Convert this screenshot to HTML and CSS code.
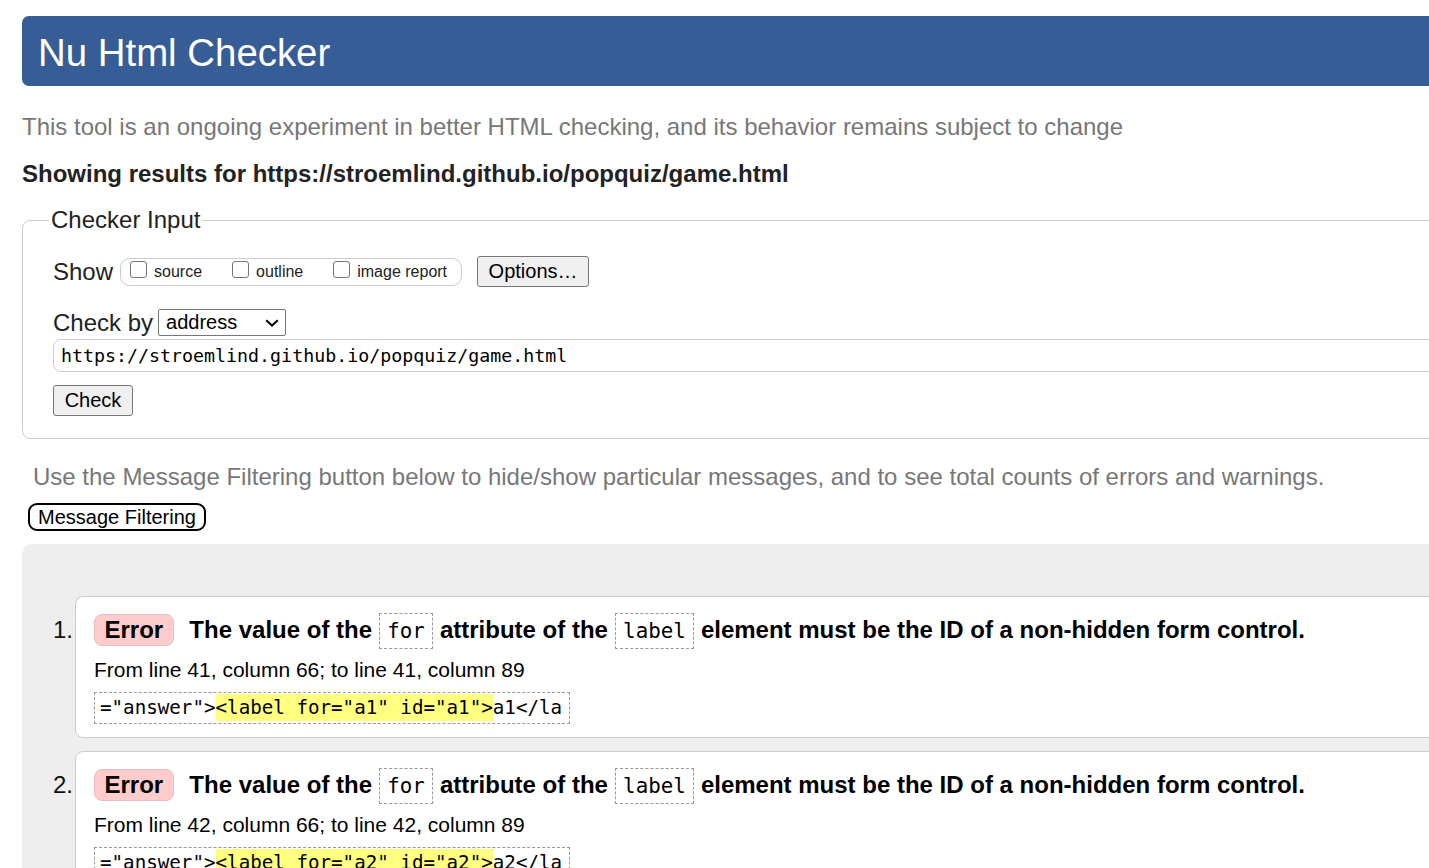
FILE: index.html
```html
<!DOCTYPE html>
<html lang="en">
<head>
<meta charset="utf-8">
<title>Showing results for https://stroemlind.github.io/popquiz/game.html - Nu Html Checker</title>
<link rel="stylesheet" href="styles.css">
</head>
<body>
<div class="page">
  <h1 class="banner">Nu Html Checker</h1>
  <p class="intro">This tool is an ongoing experiment in better HTML checking, and its behavior remains subject to change</p>
  <p class="showing">Showing results for https://stroemlind.github.io/popquiz/game.html</p>

  <fieldset class="checker-input">
    <legend>Checker Input</legend>
    <div class="row show-row">
      <span class="row-label">Show</span>
      <span class="show-opts">
        <label class="opt"><span class="cb"></span>source</label>
        <label class="opt"><span class="cb"></span>outline</label>
        <label class="opt"><span class="cb"></span>image report</label>
      </span>
      <span class="btn options-btn">Options…</span>
    </div>
    <div class="row checkby-row">
      <span class="row-label">Check by</span>
      <span class="select">address<svg class="chev" width="14" height="8" viewBox="0 0 14 8"><path d="M1.2 1.2 L7 6.6 L12.8 1.2" fill="none" stroke="#000" stroke-width="2"/></svg></span>
    </div>
    <div class="url">https://stroemlind.github.io/popquiz/game.html</div>
    <span class="btn check-btn">Check</span>
  </fieldset>

  <p class="filter-note">Use the Message Filtering button below to hide/show particular messages, and to see total counts of errors and warnings.</p>
  <span class="filter-btn">Message Filtering</span>

  <div class="results">
    <ol class="messages">
      <li class="msg-item">
        <p class="msg-line"><span class="badge">Error</span> The value of the <code class="kw">for</code> attribute of the <code class="kw">label</code> element must be the ID of a non-hidden form control.</p>
        <p class="location">From line 41, column 66; to line 41, column 89</p>
        <code class="extract">="answer"&gt;<mark class="hl">&lt;label for="a1" id="a1"&gt;</mark>a1&lt;/la</code>
      </li>
      <li class="msg-item">
        <p class="msg-line"><span class="badge">Error</span> The value of the <code class="kw">for</code> attribute of the <code class="kw">label</code> element must be the ID of a non-hidden form control.</p>
        <p class="location">From line 42, column 66; to line 42, column 89</p>
        <code class="extract">="answer"&gt;<mark class="hl">&lt;label for="a2" id="a2"&gt;</mark>a2&lt;/la</code>
      </li>
    </ol>
  </div>
</div>
</body>
</html>
```

FILE: styles.css
```css
html {
  overflow: hidden;
  background: #fff;
}
body {
  margin: 0;
  font-family: "Liberation Sans", Arial, sans-serif;
  color: #222;
}
.page {
  width: 1460px;
  padding: 16px 0 0 22px;
}
.banner {
  margin: 0;
  box-sizing: border-box;
  height: 70px;
  padding: 4px 0 0 16px;
  line-height: 66px;
  background: #365d95;
  color: #fff;
  font-size: 38.4px;
  font-weight: normal;
  border-radius: 7px;
}
.intro {
  margin: 27px 0 0;
  font-size: 24px;
  line-height: 28px;
  color: #777;
}
.showing {
  margin: 19px 0 0;
  font-size: 24px;
  line-height: 28px;
  font-weight: bold;
  color: #222;
}
.checker-input {
  margin: 18px 0 0;
  padding: 22px 30px 22px 30px;
  border: 1px solid #ccc;
  border-radius: 8px;
  min-width: 0;
}
.checker-input legend {
  font-size: 24px;
  line-height: 28px;
  padding: 0 2px;
  margin-left: -4px;
  color: #222;
}
.row {
  display: flex;
  align-items: center;
}
.row-label {
  font-size: 24px;
  line-height: 28px;
}
.show-row {
  height: 31px;
}
.show-opts {
  display: inline-flex;
  align-items: center;
  height: 26px;
  margin-left: 7px;
  padding: 0 14px 0 9px;
  border: 1px solid #ccc;
  border-radius: 10px;
  gap: 30px;
}
.opt {
  display: inline-flex;
  align-items: center;
  gap: 7px;
  font-size: 16px;
  line-height: 18px;
  color: #222;
}
.cb {
  width: 15px;
  height: 15px;
  border: 1px solid #767676;
  border-radius: 3px;
  background: #fff;
  margin-bottom: 5px;
}
.btn {
  display: inline-block;
  box-sizing: border-box;
  height: 31px;
  line-height: 29px;
  font-size: 20px;
  background: #efefef;
  border: 1px solid #767676;
  border-radius: 3px;
  color: #000;
  text-align: center;
}
.options-btn {
  width: 112px;
  margin-left: 15px;
}
.checkby-row {
  margin-top: 22px;
  height: 27px;
}
.select {
  display: inline-flex;
  align-items: center;
  justify-content: space-between;
  box-sizing: border-box;
  width: 128px;
  height: 27px;
  margin-left: 5px;
  padding: 0 6px 0 7px;
  border: 1px solid #767676;
  border-radius: 2px;
  font-size: 20px;
  color: #000;
  background: #fff;
}
.chev {
  display: block;
  margin-top: 1px;
}
.url {
  margin-top: 3px;
  box-sizing: border-box;
  height: 33px;
  line-height: 31px;
  padding-left: 7px;
  border: 1px solid #ccc;
  border-radius: 8px;
  font-family: "DejaVu Sans Mono", "Liberation Mono", monospace;
  font-size: 18.3px;
  color: #000;
}
.check-btn {
  width: 80px;
  margin-top: 13px;
}
.filter-note {
  margin: 24px 0 0 11px;
  font-size: 24px;
  line-height: 28px;
  color: #777;
}
.filter-btn {
  display: inline-block;
  margin: 12px 0 0 6px;
  box-sizing: border-box;
  width: 178px;
  height: 28px;
  line-height: 24px;
  text-align: center;
  font-size: 20px;
  border: 2px solid #000;
  border-radius: 9px;
  color: #000;
  background: #fff;
}
.results {
  margin-top: 13px;
  background: #eee;
  border-radius: 10px;
  padding: 52px 0 40px;
}
.messages {
  margin: 0;
  padding: 0 0 0 53px;
  font-size: 24px;
  color: #111;
}
.msg-item {
  background: #fff;
  border: 1px solid #ccc;
  border-radius: 8px;
  padding: 15px 0 13px 18px;
  margin-bottom: 13px;
}
.msg-item::marker {
  content: counter(list-item) ".\200A";
  color: #111;
}
.msg-line {
  margin: 0;
  font-weight: bold;
  line-height: 36px;
  color: #000;
  white-space: nowrap;
}
.badge {
  display: inline-block;
  line-height: 24px;
  padding: 3px 9.5px;
  margin-right: 9px;
  background: #ffcccc;
  border: 1px solid #e8bcbc;
  border-radius: 8px;
}
.kw {
  display: inline-block;
  font-family: "DejaVu Sans Mono", "Liberation Mono", monospace;
  font-weight: normal;
  font-size: 20.8px;
  line-height: 24px;
  padding: 5px 7.5px;
  border: 1px dashed #999;
}
.location {
  margin: 7px 0 0;
  font-size: 21px;
  line-height: 28px;
  color: #000;
}
.extract {
  display: block;
  width: fit-content;
  margin-top: 8px;
  padding: 4px 7px 4px 5px;
  line-height: 22px;
  font-family: "DejaVu Sans Mono", "Liberation Mono", monospace;
  font-size: 19.2px;
  color: #000;
  border: 1px dashed #999;
}
.hl {
  background: #ffff80;
  color: #000;
  padding: 2px 0;
}
```
